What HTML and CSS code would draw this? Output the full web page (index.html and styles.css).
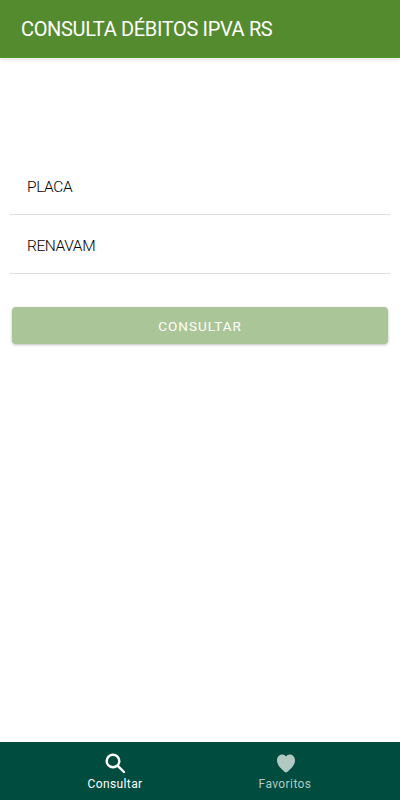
FILE: index.html
```html
<!DOCTYPE html>
<html lang="pt-BR">
<head>
  <meta charset="UTF-8" />
  <meta name="viewport" content="width=device-width, initial-scale=1.0">
  <title>Consulta Débitos IPVA RS</title>

  <link rel="stylesheet" href="styles.css">
</head>
<body>
  <header class="header">
    <h1>CONSULTA DÉBITOS IPVA RS</h1>
  </header>

  <main class="content">
    <form class="form">
      <div class="field"><span>PLACA</span></div>
      <div class="field"><span>RENAVAM</span></div>
      <button type="button" class="submit-button">CONSULTAR</button>
    </form>
  </main>

  <nav class="tabs">
    <a href="#" class="tab tab-active">
      <svg class="tab-icon" viewBox="0 0 24 24" width="24" height="24" fill="none" stroke="currentColor" stroke-width="2.400" stroke-linecap="round">
        <circle cx="10" cy="10" r="6.300" />
        <path d="M14.800 14.800l6.200 6.200" />
      </svg>
      <span>Consultar</span>
    </a>
    <a href="#" class="tab">
      <svg class="tab-icon" viewBox="0 0 24 24" width="24" height="24" fill="currentColor">
        <path d="M13 21.500c-.5 0-1-.3-1.500-.8C7 16.800 4 13.900 4 9.200 4 6 6.300 3.400 9.200 3.400c1.600 0 3 .7 3.800 2 .8-1.300 2.200-2 3.800-2 2.900 0 5.200 2.600 5.200 5.800 0 4.700-3 7.600-7.500 11.500-.5.5-1 .8-1.500.8z" />
      </svg>
      <span>Favoritos</span>
    </a>
  </nav>
</body>
</html>
```

FILE: styles.css
```css
* {
  box-sizing: border-box;
  margin: 0;
  padding: 0;
}

body {
  font-family: Roboto, Lato, sans-serif;
  display: flex;
  flex-direction: column;
  height: 800px;
  background-color: #fff;
  overflow: hidden;
}

.header {
  height: 58px;
  padding-left: 21px;
  display: flex;
  align-items: center;
  background-color: #558b2f;
  border-bottom: 1px solid #4f9a20;
  box-shadow: 0 2px 4px rgba(0,0,0,0.1);
}

.header h1 {
  font-size: 20px;
  font-weight: 400;
  letter-spacing: -0.35px;
  color: #fff;
}

.content {
  flex: 1;
  padding: 98px 10px 0;
}

.field {
  height: 59px;
  padding: 3px 17px 0;
  display: flex;
  align-items: center;
  border-bottom: 1px solid #ddd;
  font-size: 15.5px;
  font-weight: 300;
  letter-spacing: -0.4px;
  color: #000;
}

.submit-button {
  display: block;
  width: calc(100% - 4px);
  height: 37px;
  margin: 33px 2px 0;
  border: none;
  border-radius: 4px;
  background-color: #aac699;
  color: #fff;
  font-family: inherit;
  font-size: 13.5px;
  letter-spacing: 1px;
  box-shadow: 0 1px 3px rgba(0,0,0,0.25);
}

.tabs {
  height: 58px;
  padding: 0 30px;
  display: flex;
  background-color: #004d40;
}

.tab {
  flex: 1;
  display: flex;
  flex-direction: column;
  align-items: center;
  padding-top: 9px;
  color: #b2c9c2;
  font-size: 12px;
  letter-spacing: 0.4px;
  text-decoration: none;
}

.tab-active {
  color: #fff;
}

.tab-icon {
  margin-bottom: 2px;
}
```
